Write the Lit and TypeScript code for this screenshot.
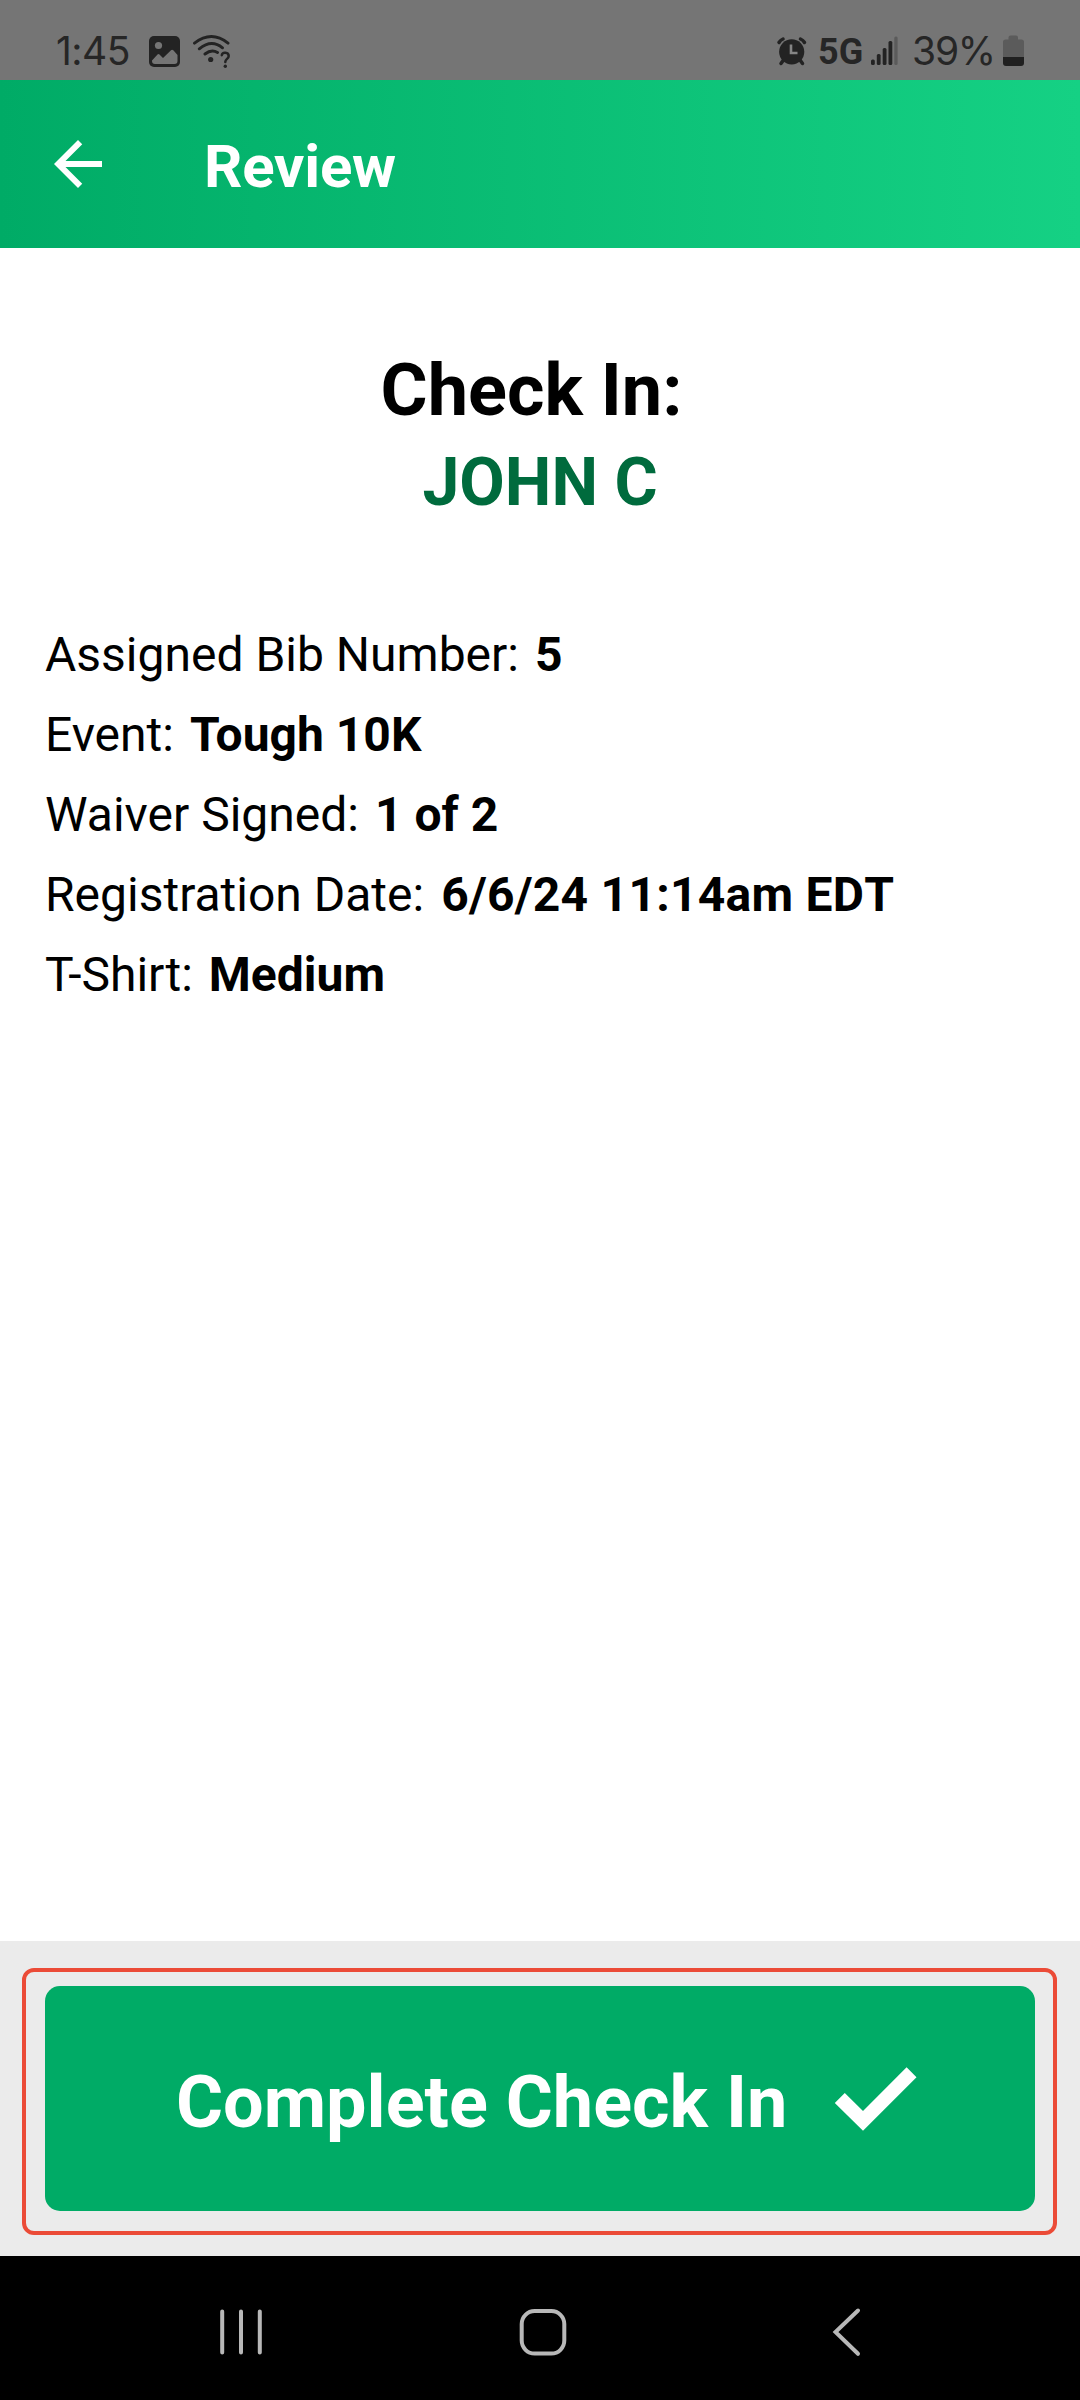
import { LitElement, html, css } from "lit";
import { customElement } from "lit/decorators.js";

@customElement("status-bar")
class StatusBar extends LitElement {
  static styles = css`
    :host {
      display: flex;
      justify-content: space-between;
      box-sizing: border-box;
      height: 80px;
      padding: 31px 56px 0 56px;
      background: #757575;
      color: #262626;
      font-family: Inter, sans-serif;
      font-size: 39px;
      font-weight: 400;
      line-height: 40px;
    }
    .side {
      display: flex;
      height: 40px;
    }
    svg {
      display: block;
      flex: none;
      height: 40px;
    }
    .clock {
      width: 90px;
      white-space: nowrap;
      letter-spacing: -0.5px;
    }
    .network {
      width: 48px;
      font: 700 36px/42px Roboto, sans-serif;
    }
    .percent {
      width: 88px;
      white-space: nowrap;
      letter-spacing: -1.2px;
    }
  `;

  render() {
    return html`
      <div class="side">
        <span class="clock">1:45</span>
        <svg width="42" viewBox="146 31 42 40">
          <rect x="149" y="36" width="31" height="31" rx="5" fill="#232323" />
          <circle cx="158.5" cy="45.5" r="3.6" fill="#757575" />
          <path d="M152 60.500L157.500 54.500Q158.500 53.700 159.500 54.500L163 58L171 50.200Q172.200 49.300 173.300 50.300L177.500 55V61Q177.500 64 174.500 64H155Q152 64 152 61Z" fill="#757575" />
        </svg>
        <svg width="46" viewBox="188 31 46 40" fill="none" stroke="#232323" stroke-width="2.9" stroke-linecap="round">
          <path d="M194.500 43.200Q211.500 30 228 43.200M199.300 48.800Q211.500 38.800 222.500 47.800M205 54Q211.500 48.800 217.500 52.500" />
          <circle cx="210.700" cy="59.500" r="2.600" fill="#232323" stroke="none" />
          <path d="M221.800 55.200C222.300 51.600 228.700 51.900 228.700 56C228.700 59 225.300 58.800 225.300 62" stroke-width="2.500" />
          <circle cx="225.300" cy="66.300" r="1.700" fill="#232323" stroke="none" />
        </svg>
      </div>
      <div class="side">
        <svg width="44" viewBox="774 31 44 40">
          <g stroke="#232323" stroke-linecap="round" fill="none">
            <path d="M779 42.500Q780.500 40 783 39M804.500 42.500Q803 40 800.500 39" stroke-width="3.500" />
            <path d="M783.500 60L781 63.500M800 60L802.500 63.500" stroke-width="3.500" />
          </g>
          <circle cx="791.700" cy="51.800" r="12.600" fill="#232323" />
          <path d="M791 44.500V53H797.500" fill="none" stroke="#858585" stroke-width="2.600" />
        </svg>
        <span class="network">5G</span>
        <svg width="46" viewBox="866 31 46 40" fill="#232323">
          <rect x="871" y="59.500" width="3.800" height="5.500" rx="1.500" />
          <rect x="876.800" y="54" width="3.800" height="11" rx="1.500" />
          <rect x="882.700" y="48" width="3.800" height="17" rx="1.500" />
          <rect x="888.500" y="41" width="3.800" height="24" rx="1.500" />
          <rect x="894.300" y="36.500" width="3.300" height="28.500" rx="1.500" fill="#5b5b5b" />
        </svg>
        <span class="percent">39%</span>
        <svg width="24" viewBox="1000 31 24 40">
          <path d="M1003 57V42Q1003 39.500 1005.500 39.500H1008.500V37.500Q1008.500 35.500 1010.500 35.500H1016Q1018 35.500 1018 37.500V39.500H1021.500Q1024 39.500 1024 42V57Z" fill="#5b5b5b" />
          <path d="M1003 57H1024V63Q1024 66 1021 66H1006Q1003 66 1003 63Z" fill="#202020" />
        </svg>
      </div>
    `;
  }
}

@customElement("app-header")
class AppHeader extends LitElement {
  static styles = css`
    :host {
      display: flex;
      align-items: center;
      box-sizing: border-box;
      height: 168px;
      padding-left: 42px;
      gap: 90px;
      background: linear-gradient(90deg, #00ab66, #15d184);
      color: #fff;
    }
    .back {
      display: block;
      width: 72px;
      height: 72px;
      fill: #fff;
    }
    .title {
      margin: 6px 0 0;
      font: 700 60px/72px Roboto, sans-serif;
      letter-spacing: -0.2px;
    }
  `;

  render() {
    return html`
      <svg class="back" viewBox="0 0 24 24">
        <path d="M20 11H7.830l5.590-5.590L12 4l-8 8 8 8 1.410-1.410L7.830 13H20v-2z" />
      </svg>
      <h1 class="title">Review</h1>
    `;
  }
}

@customElement("nav-bar")
class NavBar extends LitElement {
  static styles = css`
    :host {
      display: flex;
      align-items: center;
      justify-content: space-between;
      box-sizing: border-box;
      height: 144px;
      padding: 8px 206px 0 211px;
      background: #000;
    }
    svg {
      display: block;
      fill: none;
      stroke: #b8b8b8;
      stroke-width: 4;
      stroke-linecap: round;
    }
  `;

  render() {
    return html`
      <svg width="60" height="60" viewBox="211 2302 60 60">
        <path d="M222.200 2311.500V2352.500M241 2311.500V2352.500M259.800 2311.500V2352.500" />
      </svg>
      <svg width="60" height="60" viewBox="513 2302 60 60">
        <rect x="521.700" y="2311" width="42.600" height="42.600" rx="13" />
      </svg>
      <svg width="60" height="60" viewBox="814 2302 60 60">
        <path d="M858 2310.500L835.500 2332L858 2353.800" />
      </svg>
    `;
  }
}

@customElement("app-root")
class AppRoot extends LitElement {
  static styles = css`
    :host {
      display: flex;
      flex-direction: column;
      width: 1080px;
      height: 2400px;
      overflow: hidden;
      background: #fff;
      color: #000;
      font-family: Roboto, sans-serif;
    }
    .content {
      flex: 1;
      padding: 96px 45px 0;
    }
    .heading {
      margin: 0;
      padding-left: 1px;
      text-align: center;
      font-size: 72px;
      font-weight: 700;
      line-height: 94px;
      white-space: pre-wrap;
    }
    .name {
      margin: 0 0 87px;
      text-align: center;
      color: #006b3d;
      font-size: 66px;
      font-weight: 700;
      line-height: 90px;
    }
    .row {
      display: flex;
      gap: 16px;
      font-size: 48px;
      line-height: 80px;
      white-space: nowrap;
    }
    .value {
      font-weight: 700;
    }
    .timestamp {
      padding-left: 1px;
      font-kerning: none;
      letter-spacing: 0.25px;
    }
    .footer {
      box-sizing: border-box;
      height: 315px;
      padding: 27px 23px 21px 22px;
      background: #ebebeb;
    }
    .frame {
      box-sizing: border-box;
      height: 267px;
      padding: 14px 18px 0 19px;
      border: 4px solid #eb4b37;
      border-radius: 12px;
    }
    .button {
      display: flex;
      align-items: center;
      box-sizing: border-box;
      width: 990px;
      height: 225px;
      padding: 0 0 0 131px;
      gap: 47px;
      border: 0;
      border-radius: 15px;
      background: #00ab66;
      color: #fff;
      font: 700 72px/84px Roboto, sans-serif;
      white-space: nowrap;
    }
    .label {
      margin-top: 9px;
    }
    .check {
      display: block;
      flex: none;
      fill: #fff;
    }
  `;

  private details = [
    { label: "Assigned Bib Number:", value: "5", style: "value" },
    { label: "Event:", value: "Tough 10K", style: "value" },
    { label: "Waiver Signed:", value: "1 of 2", style: "value" },
    { label: "Registration Date:", value: "6/6/24 11:14am EDT", style: "value timestamp" },
    { label: "T-Shirt:", value: "Medium", style: "value" },
  ];

  render() {
    return html`
      <status-bar></status-bar>
      <app-header></app-header>
      <main class="content">
        <h2 class="heading">Check In:&nbsp;</h2>
        <p class="name">JOHN C</p>
        ${this.details.map(
          ({ label, value, style }) => html`
            <div class="row"><span>${label}</span><span class=${style}>${value}</span></div>
          `
        )}
      </main>
      <div class="footer">
        <div class="frame">
          <button class="button">
            <span class="label">Complete Check In</span>
            <svg class="check" width="84" height="66" viewBox="834 2065.500 84 66">
              <path d="M834.800 2102.500L844.800 2092.500L863 2110.500L906.600 2066.800L916.500 2076.700L863 2130.200Z" />
            </svg>
          </button>
        </div>
      </div>
      <nav-bar></nav-bar>
    `;
  }
}
